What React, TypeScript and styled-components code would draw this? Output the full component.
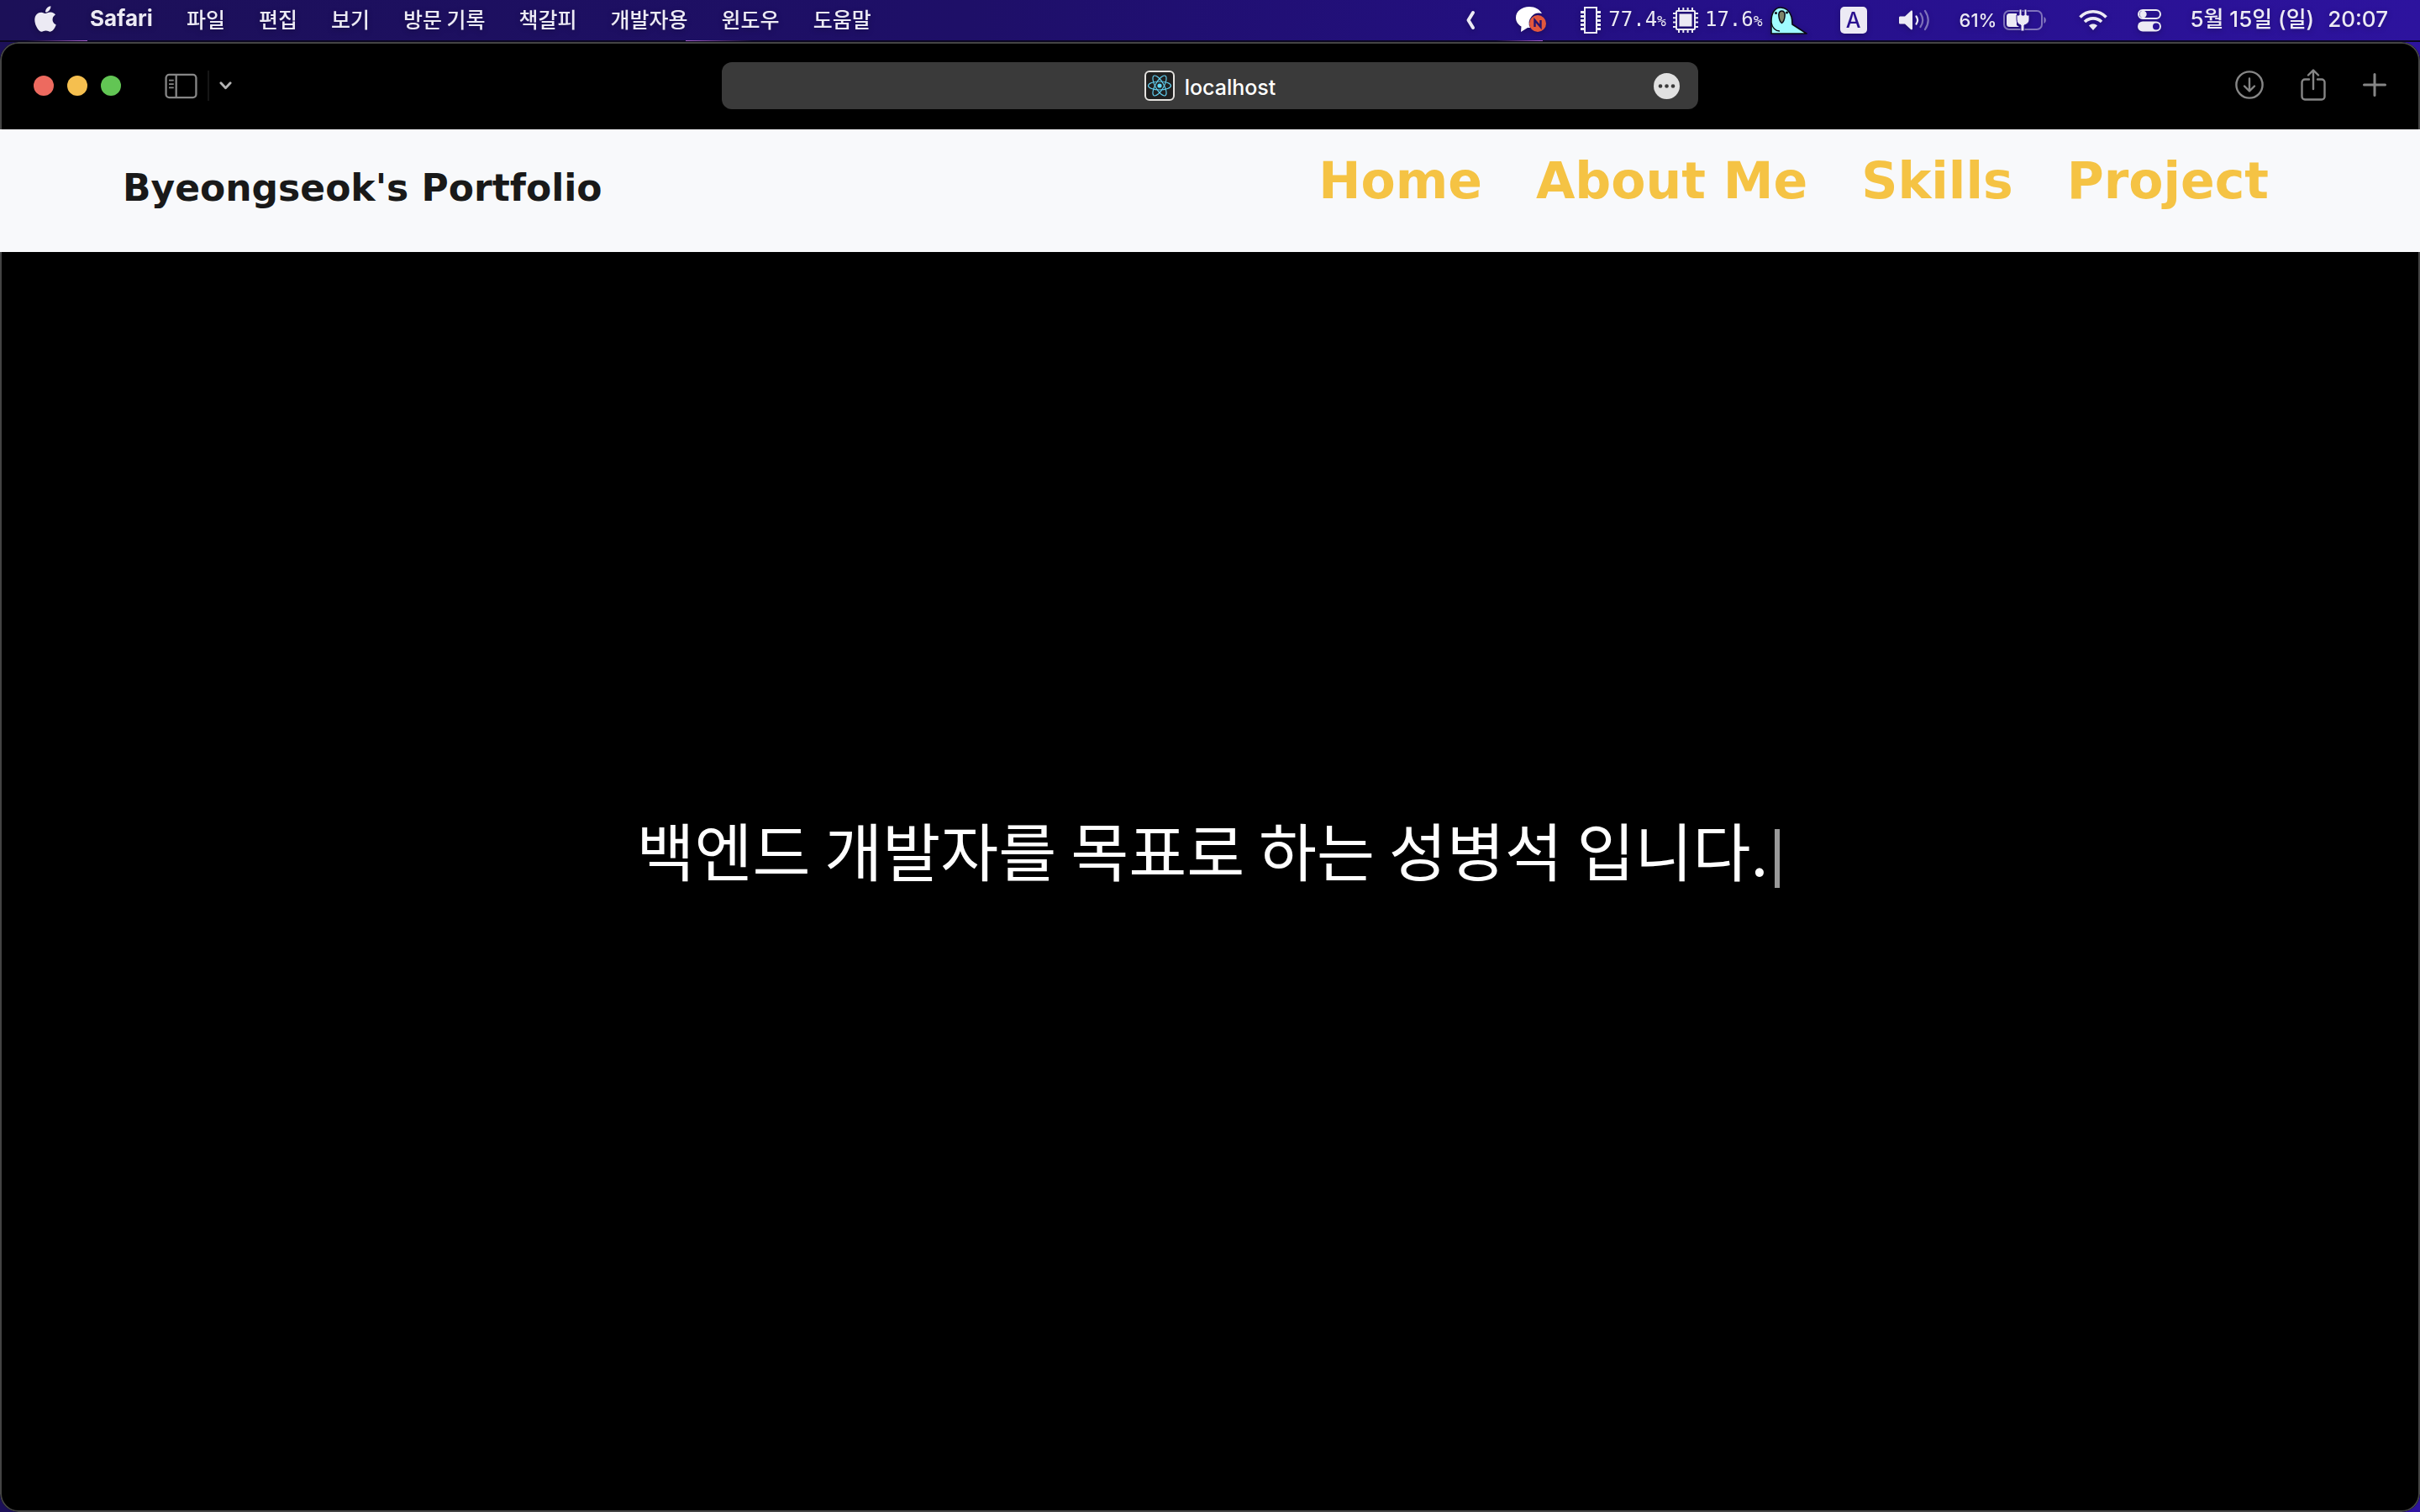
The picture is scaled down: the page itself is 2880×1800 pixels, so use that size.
import React from "react";
import styled, { createGlobalStyle } from "styled-components";
import { FaApple } from "react-icons/fa";

const sans = `Inter, "Noto Sans CJK KR", sans-serif`;
const korean = `"Noto Sans CJK KR", sans-serif`;
const mono = `"DejaVu Sans Mono", monospace`;
const display = `"DejaVu Sans", Inter, sans-serif`;

const GlobalStyle = createGlobalStyle`
  *, *::before, *::after { box-sizing: border-box; }
  body { margin: 0; background: #1d1257; font-family: ${sans}; }
  button, input { font: inherit; color: inherit; }
  svg { display: block; flex: none; }
`;

const Desktop = styled.div`
  display: flex;
  flex-direction: column;
  min-height: 100vh;
  background: linear-gradient(90deg, #1c1058 0%, #1e0f68 40%, #251088 70%, #2d139e 100%);
`;

const MenuBar = styled.header`
  display: flex;
  align-items: center;
  justify-content: space-between;
  height: 48px;
  padding: 0 38px 0 41px;
  color: #eceaf4;
  filter: drop-shadow(0 2px 3px rgba(0, 0, 0, 0.25));
`;

const Menus = styled.nav`
  display: flex;
  align-items: center;
  gap: 40px;
  padding-bottom: 4px;
`;

const MenuButton = styled.button<{ $bold?: boolean }>`
  display: flex;
  padding: 0;
  border: 0;
  background: none;
  font-family: ${(p) => (p.$bold ? sans : korean)};
  font-size: ${(p) => (p.$bold ? 26 : 25)}px;
  font-weight: ${(p) => (p.$bold ? 700 : 500)};
  line-height: 44px;
  white-space: nowrap;
`;

const AppleLogo = styled(FaApple)`
  width: 26px;
  height: 35px;
`;

const Status = styled.div`
  display: flex;
  align-items: center;
`;

const StatusItem = styled.button<{ $gap?: number }>`
  display: flex;
  align-items: center;
  gap: 8px;
  margin: 0 0 0 ${(p) => p.$gap ?? 0}px;
  padding: 0;
  border: 0;
  background: none;
  font-size: 22px;
  font-weight: 500;
  line-height: 44px;
  white-space: nowrap;
`;

const Meter = styled.span`
  display: flex;
  align-items: baseline;
  font-family: ${mono};
  font-size: 24px;
  font-weight: 400;
  line-height: 48px;

  small { font-size: 18px; }
`;

const Clock = styled.time`
  display: flex;
  gap: 16px;
  margin-left: 34px;
  padding-bottom: 2px;
  font-size: 26px;
  font-weight: 500;
  line-height: 44px;
  white-space: nowrap;
`;

const Streaks = styled.div`
  height: 2px;
  background:
    linear-gradient(90deg, transparent, #a65fc4) 30px 0 / 74px 1px no-repeat,
    linear-gradient(90deg, #a65fc4, transparent) 816px 0 / 80px 1px no-repeat,
    linear-gradient(90deg, transparent, #a65fc4) 1780px 0 / 56px 1px no-repeat,
    #0b0720;
`;

const BrowserWindow = styled.main`
  display: flex;
  flex: 1;
  flex-direction: column;
  overflow: hidden;
  border-radius: 22px;
  background: #000;
  position: relative;

  &::after {
    content: "";
    position: absolute;
    inset: 0;
    border: 2px solid rgba(150, 150, 150, 0.45);
    border-radius: 22px;
    pointer-events: none;
  }
`;

const Toolbar = styled.div`
  display: grid;
  grid-template-columns: 1fr minmax(0, 1162px) 1fr;
  align-items: center;
  height: 104px;
  padding: 0 40px;
  color: #868686;
`;

const ToolGroup = styled.div<{ $end?: boolean; $gap: number }>`
  display: flex;
  align-items: center;
  justify-content: ${(p) => (p.$end ? "flex-end" : "flex-start")};
  gap: ${(p) => p.$gap}px;
  padding-bottom: ${(p) => (p.$end ? 3 : 0)}px;
`;

const Traffic = styled.div`
  display: flex;
  gap: 16px;
  margin-right: 40px;
`;

const Light = styled.button<{ $color: string }>`
  width: 24px;
  height: 24px;
  padding: 0;
  border: 0;
  border-radius: 50%;
  background: ${(p) => p.$color};
`;

const ToolButton = styled.button`
  display: flex;
  padding: 0;
  border: 0;
  background: none;
`;

const Divider = styled.span`
  width: 2px;
  height: 36px;
  background: #161616;
`;

const AddressBar = styled.div`
  display: grid;
  grid-template-columns: 1fr auto 1fr;
  align-items: center;
  height: 56px;
  padding: 0 22px;
  border-radius: 12px;
  background: #3a3a3a;
  color: #fff;
`;

const Address = styled.label`
  grid-column: 2;
  display: flex;
  align-items: center;
  gap: 12px;
`;

const AddressInput = styled.input`
  field-sizing: content;
  min-width: 0;
  padding: 3px 0 0;
  border: 0;
  outline: 0;
  background: none;
  font-size: 25px;
  font-weight: 500;
  line-height: 36px;
`;

const MoreButton = styled(ToolButton)`
  justify-self: end;
`;

const SiteHeader = styled.header`
  display: flex;
  align-items: center;
  justify-content: space-between;
  position: relative;
  z-index: 1;
  height: 146px;
  padding: 0 180px 0 146px;
  background: #f8f9fb;
`;

const Brand = styled.a`
  padding-bottom: 6px;
  color: #191919;
  font-family: ${display};
  font-size: 44px;
  font-weight: 700;
  line-height: 56px;
  text-decoration: none;
  white-space: nowrap;
`;

const SiteNav = styled.nav`
  display: flex;
  gap: 64px;
  padding-bottom: 24px;
`;

const NavLink = styled.a`
  color: #f5c344;
  font-family: ${display};
  font-size: 60px;
  font-weight: 700;
  line-height: 72px;
  text-decoration: none;
  white-space: nowrap;
`;

const Hero = styled.section`
  display: flex;
  flex: 1;
  align-items: center;
  justify-content: center;
  padding-bottom: 78px;
`;

const Headline = styled.h1`
  display: flex;
  align-items: center;
  gap: 8px;
  margin: 0;
  padding-right: 4px;
  color: #fff;
  font-family: ${korean};
  font-size: 75px;
  font-weight: 400;
  line-height: 112px;
  white-space: nowrap;
`;

const Caret = styled.span`
  width: 6px;
  height: 70px;
  margin-top: 22px;
  background: #999;
`;

const menus = ["파일", "편집", "보기", "방문 기록", "책갈피", "개발자용", "윈도우", "도움말"];
const pages = ["Home", "About Me", "Skills", "Project"];

const ChevronLeft = () => (
  <svg width="12" height="24" viewBox="0 0 12 24" fill="none" stroke="currentColor" strokeWidth="4" strokeLinecap="round" strokeLinejoin="round">
    <path d="M9 3 3.500 12 9 21" />
  </svg>
);

const ChatIcon = () => (
  <svg width="38" height="32" viewBox="0 0 38 32">
    <path fill="#fff" d="M16 0C7 0 0 5.500 0 13c0 5 3 8.500 6.500 10.500L6 30l8-5h3A12 12 0 0 1 31 8C28 3 23 0 16 0Z" />
    <circle cx="26" cy="20" r="10" fill="#e2573d" />
    <path d="M22.500 24v-8l7 8v-8" fill="none" stroke="#26136f" strokeWidth="2.400" />
  </svg>
);

const MemoryIcon = () => (
  <svg width="26" height="32" viewBox="0 0 26 32" fill="none" stroke="currentColor">
    <rect x="6" y="1" width="14" height="30" strokeWidth="2" />
    <path strokeWidth="4" strokeDasharray="3 2" d="M3 5v23M23 5v23" />
  </svg>
);

const CpuIcon = () => (
  <svg width="30" height="30" viewBox="0 0 30 30" fill="none" stroke="currentColor" strokeWidth="2">
    <rect x="4" y="4" width="22" height="22" rx="1" />
    <rect x="8.500" y="8.500" width="13" height="13" fill="currentColor" />
    <path d="M7 0v4M12.300 0v4M17.600 0v4M23 0v4M7 26v4M12.300 26v4M17.600 26v4M23 26v4M0 7h4M0 12.300h4M0 17.600h4M0 23h4M26 7h4M26 12.300h4M26 17.600h4M26 23h4" />
  </svg>
);

const ParrotIcon = () => (
  <svg width="46" height="34" viewBox="0 0 46 34">
    <path d="M2 33V18C2 9 6 2 13 2c8 0 11 5 13 11 1 4 1 6 1 9l17 11Z" fill="#9ffcff" stroke="#0a0a14" strokeWidth="1.600" strokeLinejoin="round" />
    <path d="M2 20c1 6 5 10 10 10" fill="none" stroke="#0a0a14" strokeWidth="1.500" />
    <path d="M14.500 6c3 0 4 3 3.500 6.500-.4 4-2 7-3.500 8-1.500-1-3.100-4-3.500-8C10.500 9 11.500 6 14.500 6Z" fill="#7e8569" stroke="#0a0a14" strokeWidth="1.500" />
    <circle cx="7.500" cy="8.500" r="1.500" fill="#0a0a14" />
    <circle cx="20.500" cy="8" r="1.500" fill="#0a0a14" />
  </svg>
);

const InputSource = styled.span`
  display: grid;
  place-items: center;
  width: 32px;
  height: 32px;
  border-radius: 5px;
  background: #eceaf4;
  color: #29118f;
  font-size: 25px;
  font-weight: 500;
  line-height: 32px;
`;

const VolumeIcon = () => (
  <svg width="38" height="26" viewBox="0 0 38 26" fill="none" stroke="currentColor" strokeWidth="2.200" strokeLinecap="round">
    <path d="M1.500 8.500h5.500l7-6.500c1-.8 2-.4 2 1v20c0 1.400-1 1.800-2 1l-7-6.500H1.500C.6 17.500 0 17 0 16v-6c0-1 .6-1.500 1.500-1.500Z" fill="currentColor" stroke="none" />
    <path d="M20.500 8.500c2 2.800 2 6.200 0 9" />
    <path opacity=".45" d="M25.500 5c3.400 5 3.400 11 0 16" />
    <path opacity=".45" d="M31 2c4.700 7 4.700 15 0 22" />
  </svg>
);

const BatteryIcon = () => (
  <svg width="52" height="26" viewBox="0 0 52 26">
    <rect x="1" y="2" width="45" height="22" rx="6" fill="none" stroke="currentColor" strokeWidth="2" opacity=".45" />
    <path d="M48.500 9c3 1.500 3 6.500 0 8Z" fill="currentColor" opacity=".5" />
    <path d="M7.500 5H16v14l3 2H7.500A3.500 3.500 0 0 1 4 17.500v-9A3.500 3.500 0 0 1 7.500 5Z" fill="currentColor" />
    <path d="M19 0v7h-3v5c0 4 2 6 5 7v7h4v-7c3-1 6-3 6-7V7h-3V0h-3v7h-3V0Z" fill="currentColor" stroke="#29118f" strokeWidth="1" />
  </svg>
);

const WifiIcon = () => (
  <svg width="34" height="26" viewBox="0 0 34 26" fill="none" stroke="currentColor" strokeWidth="3.600">
    <path d="M1.500 9.500C10 .5 24 .5 32.500 9.500" />
    <path d="M7 15c5.500-5.500 14.500-5.500 20 0" />
    <path d="m17 25-5-5.500c3-2.600 7-2.600 10 0Z" fill="currentColor" stroke="none" />
  </svg>
);

const ControlIcon = () => (
  <svg width="28" height="27" viewBox="0 0 28 27">
    <rect x="1" y="1" width="26" height="10" rx="5" fill="none" stroke="currentColor" strokeWidth="2" />
    <circle cx="6.500" cy="6" r="4.200" fill="currentColor" />
    <rect y="14.500" width="28" height="12" rx="6" fill="currentColor" />
    <circle cx="22" cy="20.500" r="4" fill="#2a1195" />
  </svg>
);

const SidebarIcon = () => (
  <svg width="39" height="31" viewBox="0 0 40 32" fill="none" stroke="currentColor" strokeWidth="2.400">
    <rect x="1.500" y="2" width="37" height="28" rx="4" />
    <path d="M14 2v28" />
    <path d="M5 9h6M5 13.500h6M5 18h6" strokeWidth="1.800" />
  </svg>
);

const ChevronDown = () => (
  <svg width="15" height="12" viewBox="0 0 16 12" fill="none" stroke="#b4b4b4" strokeWidth="3" strokeLinecap="round" strokeLinejoin="round">
    <path d="m2 2.500 6 6.500 6-6.500" />
  </svg>
);

const ReactFavicon = () => (
  <svg width="36" height="36" viewBox="0 0 36 36">
    <rect x="1" y="1" width="34" height="34" rx="5" fill="#202020" stroke="#e4e2df" strokeWidth="2" />
    <g fill="none" stroke="#61cdee" strokeWidth="1.200">
      <ellipse cx="18" cy="18" rx="13.500" ry="5" />
      <ellipse cx="18" cy="18" rx="13.500" ry="5" transform="rotate(60 18 18)" />
      <ellipse cx="18" cy="18" rx="13.500" ry="5" transform="rotate(120 18 18)" />
    </g>
    <circle cx="18" cy="18" r="2.600" fill="#61dafb" />
  </svg>
);

const MoreIcon = () => (
  <svg width="31" height="31" viewBox="0 0 31 31" fill="#3a3a3a">
    <circle cx="15.500" cy="15.500" r="15.500" fill="#e1e1e1" />
    <circle cx="8" cy="15.500" r="2.300" />
    <circle cx="15.500" cy="15.500" r="2.300" />
    <circle cx="23" cy="15.500" r="2.300" />
  </svg>
);

const DownloadIcon = () => (
  <svg width="34" height="34" viewBox="0 0 34 34" fill="none" stroke="currentColor" strokeWidth="2.400" strokeLinecap="round" strokeLinejoin="round">
    <circle cx="17" cy="17" r="15.600" />
    <path d="M17 9.500V24M11 18.500l6 6 6-6" />
  </svg>
);

const ShareIcon = () => (
  <svg width="30" height="38" viewBox="0 0 30 38" fill="none" stroke="currentColor" strokeWidth="2.400" strokeLinecap="round" strokeLinejoin="round">
    <path d="M10 12.500H5A3.500 3.500 0 0 0 1.500 16v17A3.500 3.500 0 0 0 5 36.500h20a3.500 3.500 0 0 0 3.500-3.500V16a3.500 3.500 0 0 0-3.500-3.500h-5" />
    <path d="M15 24V2M9 7.500l6-6 6 6" />
  </svg>
);

const PlusIcon = () => (
  <svg width="28" height="28" viewBox="0 0 28 28" stroke="currentColor" strokeWidth="3" strokeLinecap="round">
    <path d="M14 1.500v25M1.500 14h25" />
  </svg>
);

export default function App() {
  return (
    <Desktop>
      <GlobalStyle />
      <MenuBar>
        <Menus aria-label="Menu bar">
          <MenuButton aria-label="Apple"><AppleLogo /></MenuButton>
          <MenuButton $bold>Safari</MenuButton>
          {menus.map((name) => <MenuButton key={name}>{name}</MenuButton>)}
        </Menus>
        <Status>
          <StatusItem aria-label="Show more"><ChevronLeft /></StatusItem>
          <StatusItem $gap={48} aria-label="Messages"><ChatIcon /></StatusItem>
          <StatusItem $gap={38}>
            <MemoryIcon />
            <Meter>77.4<small>%</small></Meter>
            <CpuIcon />
            <Meter>17.6<small>%</small></Meter>
            <ParrotIcon />
          </StatusItem>
          <StatusItem $gap={38} aria-label="Input source"><InputSource>A</InputSource></StatusItem>
          <StatusItem $gap={38} aria-label="Volume"><VolumeIcon /></StatusItem>
          <StatusItem $gap={34}>61%<BatteryIcon /></StatusItem>
          <StatusItem $gap={38} aria-label="Wi-Fi"><WifiIcon /></StatusItem>
          <StatusItem $gap={36} aria-label="Control centre"><ControlIcon /></StatusItem>
          <Clock><span>5월 15일 (일)</span><span>20:07</span></Clock>
        </Status>
      </MenuBar>
      <Streaks />
      <BrowserWindow>
        <Toolbar>
          <ToolGroup $gap={12}>
            <Traffic>
              <Light $color="#ed6a5f" aria-label="Close" />
              <Light $color="#f5bf4f" aria-label="Minimise" />
              <Light $color="#62c554" aria-label="Zoom" />
            </Traffic>
            <ToolButton aria-label="Sidebar"><SidebarIcon /></ToolButton>
            <Divider />
            <ToolButton aria-label="Tab groups"><ChevronDown /></ToolButton>
          </ToolGroup>
          <AddressBar>
            <Address>
              <ReactFavicon />
              <AddressInput aria-label="Address" defaultValue="localhost" />
            </Address>
            <MoreButton aria-label="More"><MoreIcon /></MoreButton>
          </AddressBar>
          <ToolGroup $gap={44} $end>
            <ToolButton aria-label="Downloads"><DownloadIcon /></ToolButton>
            <ToolButton aria-label="Share"><ShareIcon /></ToolButton>
            <ToolButton aria-label="New tab"><PlusIcon /></ToolButton>
          </ToolGroup>
        </Toolbar>
        <SiteHeader>
          <Brand href="#home">Byeongseok's Portfolio</Brand>
          <SiteNav>
            {pages.map((page) => (
              <NavLink key={page} href={`#${page.toLowerCase().replace(" ", "-")}`}>{page}</NavLink>
            ))}
          </SiteNav>
        </SiteHeader>
        <Hero>
          <Headline>백엔드 개발자를 목표로 하는 성병석 입니다.<Caret /></Headline>
        </Hero>
      </BrowserWindow>
    </Desktop>
  );
}
